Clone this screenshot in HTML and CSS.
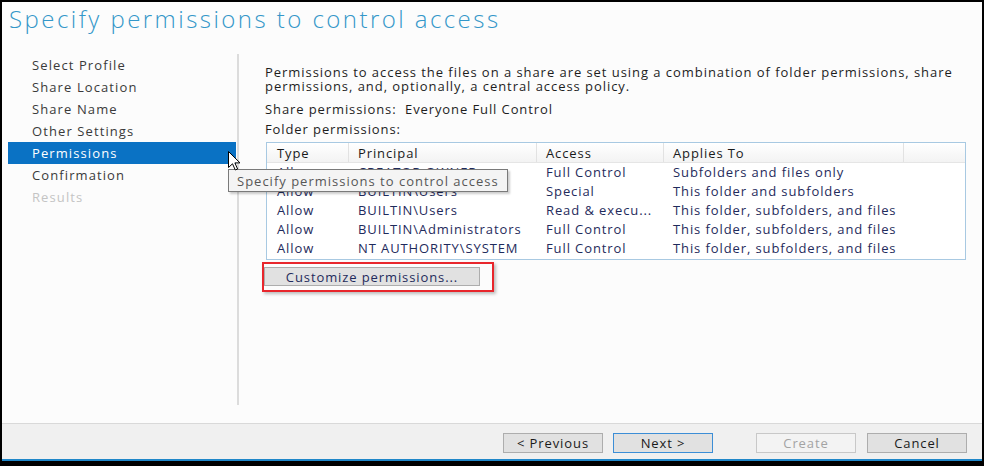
FILE: index.html
```html
<!DOCTYPE html>
<html>
<head>
<meta charset="utf-8">
<link rel="stylesheet" href="styles.css">
</head>
<body>
<div class="window">
  <div class="main">
    <h1 class="title">Specify permissions to control access</h1>
    <div class="body">
      <nav class="steps">
        <div class="step">Select Profile</div>
        <div class="step">Share Location</div>
        <div class="step">Share Name</div>
        <div class="step">Other Settings</div>
        <div class="step active">Permissions</div>
        <div class="step">Confirmation</div>
        <div class="step disabled">Results</div>
      </nav>
      <div class="divider"></div>
      <div class="content">
        <p class="intro">Permissions to access the files on a share are set using a combination of folder permissions, share permissions, and, optionally, a central access policy.</p>
        <p class="line share">Share permissions:&nbsp; Everyone Full Control</p>
        <p class="line folder">Folder permissions:</p>
        <div class="list">
          <div class="row head">
            <div class="cell">Type</div>
            <div class="cell">Principal</div>
            <div class="cell">Access</div>
            <div class="cell">Applies To</div>
            <div class="cell filler"></div>
          </div>
          <div class="row">
            <div class="cell">Allow</div>
            <div class="cell">CREATOR OWNER</div>
            <div class="cell">Full Control</div>
            <div class="cell">Subfolders and files only</div>
            <div class="cell filler"></div>
          </div>
          <div class="row">
            <div class="cell">Allow</div>
            <div class="cell">BUILTIN\Users</div>
            <div class="cell">Special</div>
            <div class="cell">This folder and subfolders</div>
            <div class="cell filler"></div>
          </div>
          <div class="row">
            <div class="cell">Allow</div>
            <div class="cell">BUILTIN\Users</div>
            <div class="cell">Read &amp; execu...</div>
            <div class="cell">This folder, subfolders, and files</div>
            <div class="cell filler"></div>
          </div>
          <div class="row">
            <div class="cell">Allow</div>
            <div class="cell">BUILTIN\Administrators</div>
            <div class="cell">Full Control</div>
            <div class="cell">This folder, subfolders, and files</div>
            <div class="cell filler"></div>
          </div>
          <div class="row">
            <div class="cell">Allow</div>
            <div class="cell">NT AUTHORITY\SYSTEM</div>
            <div class="cell">Full Control</div>
            <div class="cell">This folder, subfolders, and files</div>
            <div class="cell filler"></div>
          </div>
        </div>
        <div class="customize-wrap">
          <button class="btn customize">Customize permissions...</button>
          <span class="highlight-box"></span>
        </div>
      </div>
      <div class="tooltip">Specify permissions to control access</div>
      <svg class="cursor" width="13" height="20" viewBox="0 0 13 20">
        <path d="M0.5 0.5 L0.5 16.5 L4.5 12.8 L7.3 19 L9.6 18 L6.9 11.9 L12 11.9 Z" fill="#fff" stroke="#000" stroke-width="1" stroke-linejoin="miter"/>
      </svg>
    </div>
  </div>
  <div class="footer">
    <button class="btn nav">&lt; Previous</button>
    <button class="btn nav default">Next &gt;</button>
    <button class="btn nav create" disabled>Create</button>
    <button class="btn nav">Cancel</button>
  </div>
</div>
</body>
</html>
```

FILE: styles.css
```css
html, body {
  margin: 0;
  padding: 0;
  background: #000;
}
body {
  width: 984px;
  height: 466px;
  padding: 2px 2px 0 2px;
  box-sizing: border-box;
  font-family: "Open Sans", "Noto Sans", sans-serif;
}
.window {
  width: 980px;
  display: flex;
  flex-direction: column;
  letter-spacing: 0.9px;
}
.main {
  height: 421px;
  background: #fcfcfc;
  border-bottom: 1px solid #d9d9d9;
  position: relative;
}
.title {
  margin: 0;
  height: 52px;
  padding-left: 7px;
  font-size: 24px;
  line-height: 34px;
  font-weight: 300;
  color: #3497c9;
  letter-spacing: 2.45px;
}
.body {
  position: relative;
  display: flex;
  height: 351px;
}
.steps {
  width: 228px;
  margin-left: 6px;
  margin-right: 1px;
}
.step {
  height: 22px;
  line-height: 22px;
  padding-left: 24px;
  font-size: 13px;
  letter-spacing: 1.1px;
  color: #3a3a3a;
}
.step.active {
  background: #0a72c4;
  color: #fff;
}
.step.disabled {
  color: #c4c4c4;
}
.divider {
  width: 2px;
  background: #dcdcdc;
}
.content {
  flex: 1;
  padding-left: 26px;
  padding-right: 16px;
  font-size: 13px;
  color: #1e1e1e;
}
.intro {
  margin: 11px 0 0 0;
  line-height: 14px;
  letter-spacing: 0.95px;
}
.line {
  margin: 0;
  line-height: 14px;
}
.share { margin-top: 9px; }
.folder { margin-top: 6px; }
.list {
  margin: 6px 0 0 1px;
  width: 698px;
  height: 116px;
  border: 1px solid #a8c9e2;
  background: #fff;
}
.row {
  display: grid;
  grid-template-columns: 82px 188px 127px 240px 1fr;
  height: 19px;
  line-height: 19px;
  color: #1f2b5c;
}
.row.head {
  height: 19px;
  line-height: 20px;
  color: #1a1a1a;
  background: linear-gradient(#ffffff, #f3f3f3);
  border-bottom: 1px solid #e5e5e5;
}
.cell {
  padding-left: 9px;
  white-space: nowrap;
  overflow: hidden;
}
.row .cell:first-child { padding-left: 10px; }
.row.head .cell {
  border-right: 1px solid #e2e2e2;
}
.row.head .cell.filler { border-right: none; }
.customize-wrap {
  position: relative;
  display: inline-block;
  margin-top: 7px;
  margin-left: -1px;
}
.btn {
  font-family: "Open Sans", "Noto Sans", sans-serif;
  font-size: 13px;
  letter-spacing: 0.9px;
  color: #1a1a1a;
  background: #e1e1e1;
  border: 1px solid #adadad;
  padding: 0;
  margin: 0;
  height: 19px;
  line-height: 16px;
}
.customize {
  width: 216px;
  display: block;
  color: #1f2b5c;
}
.highlight-box {
  position: absolute;
  left: -2px;
  top: -5px;
  right: -14px;
  bottom: -6px;
  border: 2px solid #e8262c;
  box-shadow: 2px 2px 3px rgba(0,0,0,0.25);
}
.tooltip {
  position: absolute;
  left: 226px;
  top: 115px;
  width: 280px;
  height: 23px;
  line-height: 22px;
  padding-left: 8px;
  box-sizing: border-box;
  background: #f4f4f4;
  border: 1px solid #7a7a7a;
  box-shadow: 2px 2px 2px rgba(0,0,0,0.2);
  font-size: 13px;
  letter-spacing: 1px;
  color: #575757;
  white-space: nowrap;
}
.cursor {
  position: absolute;
  left: 226px;
  top: 97px;
}
.footer {
  height: 37px;
  background: #f0f0f0;
  border-bottom: 2px solid #1f87c9;
  display: flex;
  align-items: flex-start;
  padding-top: 9px;
  box-sizing: border-box;
  padding-left: 501px;
}
.btn.nav {
  width: 100px;
  height: 20px;
  margin-right: 10px;
}
.btn.nav.default {
  border-color: #3c8ed6;
}
.btn.nav.create {
  margin-left: 33px;
  margin-right: 11px;
  background: #f3f3f3;
  border-color: #c8c8c8;
  color: #a3a3a3;
}
```
